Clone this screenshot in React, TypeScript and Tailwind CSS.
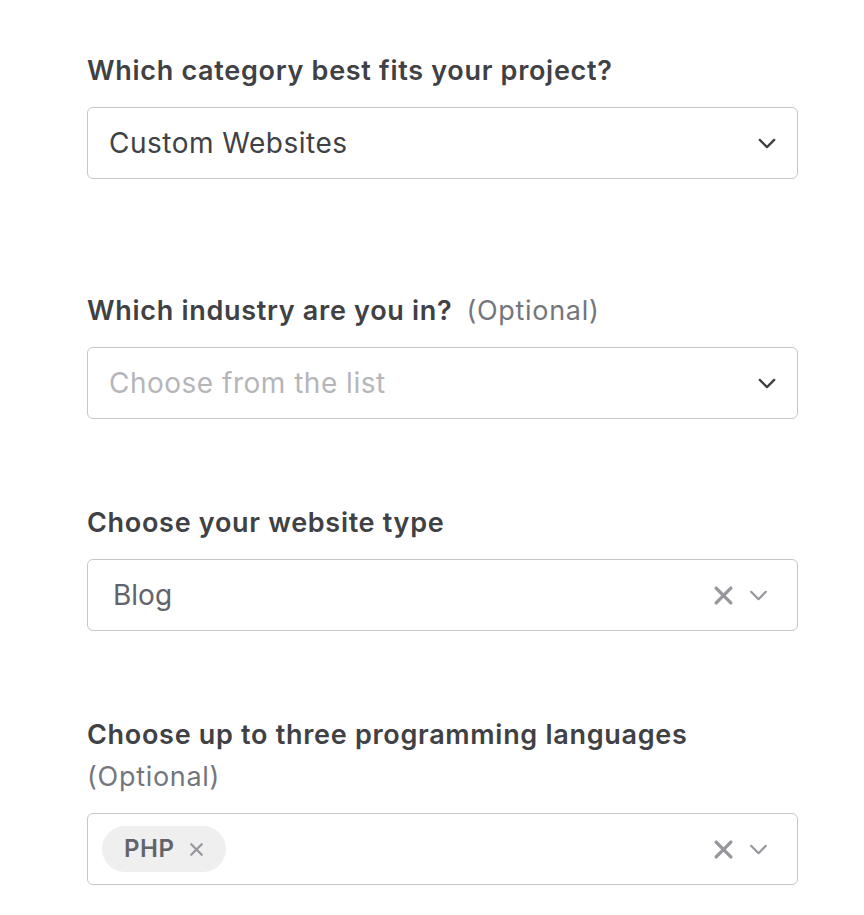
import React from "react";

const font = { fontFamily: '"Inter", "Noto Sans", sans-serif' };

function Chevron({ className = "", strokeWidth = 2.2 }: { className?: string; strokeWidth?: number }) {
  return (
    <svg viewBox="0 0 20 12" className={className} fill="none" stroke="currentColor" strokeWidth={strokeWidth} strokeLinecap="round" strokeLinejoin="round">
      <path d="M2 2l8 8 8-8" />
    </svg>
  );
}

function Cross({ className = "", strokeWidth = 3 }: { className?: string; strokeWidth?: number }) {
  return (
    <svg viewBox="0 0 20 20" className={className} fill="none" stroke="currentColor" strokeWidth={strokeWidth} strokeLinecap="round">
      <path d="M3 3l14 14M17 3L3 17" />
    </svg>
  );
}

function Label({ children, optional, wrap }: { children: React.ReactNode; optional?: boolean; wrap?: boolean }) {
  return (
    <div className="mb-[15px] text-[27px] leading-[42px] tracking-[0.7px] text-[#404145]">
      <span className="font-semibold">{children}</span>
      {optional && (wrap ? <br /> : <span className="ml-[14px]" />)}
      {optional && <span className="font-normal text-[#74767e]">(Optional)</span>}
    </div>
  );
}

function Box({ children, clearable }: { children: React.ReactNode; clearable?: boolean }) {
  return (
    <div className="flex h-[72px] items-center rounded-[6px] border border-[#c5c6c9] bg-white">
      <div className="flex flex-1 items-center">{children}</div>
      {clearable ? (
        <div className="flex items-center gap-[15px] pr-[29px] text-[#95979d]">
          <Cross className="h-[21px] w-[21px]" strokeWidth={3.2} />
          <Chevron className="h-[11px] w-[19px]" strokeWidth={2.4} />
        </div>
      ) : (
        <div className="pr-[21px] text-[#404145]">
          <Chevron className="h-[11px] w-[18px]" strokeWidth={2.6} />
        </div>
      )}
    </div>
  );
}

export default function App() {
  return (
    <div className="min-h-screen bg-white" style={font}>
      <div className="ml-[87px] w-[711px] pt-[50px]">
        <Label>Which category best fits your project?</Label>
        <Box>
          <span className="pl-[21px] text-[28px] tracking-[0.5px] text-[#404145]">Custom Websites</span>
        </Box>

        <div className="mt-[111px]">
          <Label optional>Which industry are you in?</Label>
          <Box>
            <span className="pl-[21px] text-[28px] tracking-[0.5px] text-[#b5b6ba]">Choose from the list</span>
          </Box>
        </div>

        <div className="mt-[83px]">
          <Label>Choose your website type</Label>
          <Box clearable>
            <span className="pl-[25px] text-[28px] text-[#62646a]">Blog</span>
          </Box>
        </div>

        <div className="mt-[83px]">
          <Label optional wrap>Choose up to three programming languages</Label>
          <Box clearable>
            <div className="ml-[14px] flex h-[46px] items-center gap-[15px] rounded-full bg-[#efeff0] pl-[22px] pr-[22px]">
              <span className="text-[24px] font-semibold tracking-[0.5px] text-[#62646a]">PHP</span>
              <Cross className="h-[15px] w-[15px] text-[#95979d]" strokeWidth={3} />
            </div>
          </Box>
        </div>
      </div>
    </div>
  );
}
